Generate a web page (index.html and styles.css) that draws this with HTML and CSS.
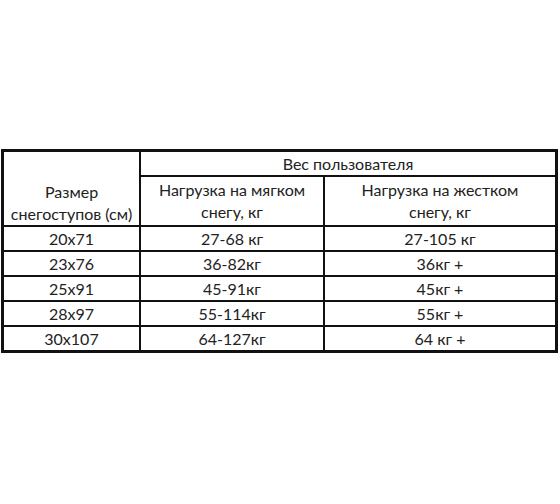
FILE: index.html
```html
<!DOCTYPE html>
<html lang="ru">
<head>
<meta charset="utf-8">
<title>Размеры снегоступов</title>
<link rel="stylesheet" href="styles.css">
</head>
<body>
<div class="page">
  <table class="sizes">
    <colgroup>
      <col class="c1"><col class="c2"><col class="c3">
    </colgroup>
    <thead>
      <tr class="h1">
        <th rowspan="2" class="size-head">Размер<br>снегоступов (см)</th>
        <th colspan="2">Вес пользователя</th>
      </tr>
      <tr class="h2">
        <th>Нагрузка на мягком<br>снегу, кг</th>
        <th>Нагрузка на жестком<br>снегу, кг</th>
      </tr>
    </thead>
    <tbody>
      <tr><td>20x71</td><td>27-68 кг</td><td>27-105 кг</td></tr>
      <tr><td>23x76</td><td>36-82кг</td><td>36кг +</td></tr>
      <tr><td>25x91</td><td>45-91кг</td><td>45кг +</td></tr>
      <tr><td>28x97</td><td>55-114кг</td><td>55кг +</td></tr>
      <tr><td>30x107</td><td>64-127кг</td><td>64 кг +</td></tr>
    </tbody>
  </table>
</div>
</body>
</html>
```

FILE: styles.css
```css
html, body {
  margin: 0;
  padding: 0;
  background: #fff;
}
.page {
  padding: 149px 0 0 1px;
}
.sizes {
  border-collapse: separate;
  border-spacing: 2px;
  border: 1px solid #111;
  background: #111;
  table-layout: fixed;
  width: 557px;
  font-family: Lato, "Open Sans", sans-serif;
  font-size: 16px;
  color: #222;
}
.c1 { width: 135px; }
.c2 { width: 182px; }
.c3 { width: 230px; }
.sizes th,
.sizes td {
  background: #fff;
  padding: 0;
  text-align: center;
  font-weight: normal;
  line-height: 22px;
}
.h1 th { height: 23px; }
.h2 th { height: 48px; vertical-align: middle; }
.size-head { vertical-align: bottom; padding-bottom: 1px; }
.sizes td { height: 23px; }
```
